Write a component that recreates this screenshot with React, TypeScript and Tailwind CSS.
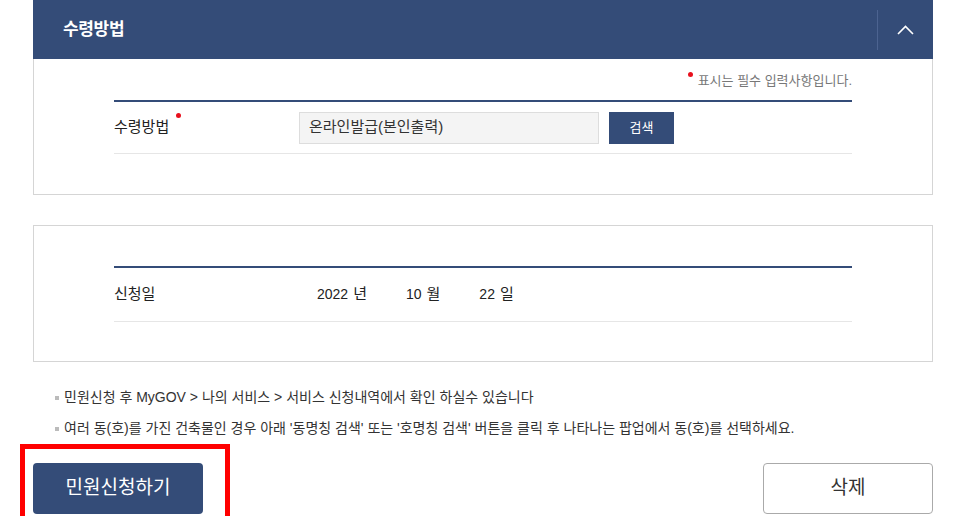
import React from "react";

const font = { fontFamily: '"Liberation Sans", "Noto Sans CJK KR", sans-serif' };

export default function App() {
  return (
    <div className="w-[967px] h-[516px] overflow-hidden bg-white text-[#222]" style={font}>
      <div className="ml-[33px] w-[900px]">
        {/* Header */}
        <div className="h-[59px] bg-[#344c78] flex items-center justify-between">
          <div className="pl-[30px] text-white text-[17px] font-bold tracking-[-0.02em]">수령방법</div>
          <div className="h-full flex items-center">
            <div className="w-px h-[40px] bg-[#4c6390]"></div>
            <div className="w-[55px] flex items-center justify-center">
              <svg width="17" height="10" viewBox="0 0 17 10" fill="none">
                <path d="M1 9 L8.5 1.5 L16 9" stroke="white" strokeWidth="1.6" />
              </svg>
            </div>
          </div>
        </div>

        {/* Panel 1 */}
        <div className="h-[136px] border-x border-b border-[#d5d5d5] px-[80px]">
          <div className="h-[41px] flex items-start justify-end pt-[12px]">
            <span className="relative text-[13px] text-[#777] pl-[10px] leading-[20px]">
              <span className="absolute left-0 top-[1px] w-[5px] h-[5px] rounded-full bg-[#e8101d]"></span>
              표시는 필수 입력사항입니다.
            </span>
          </div>
          <div className="border-t-2 border-[#344c78]">
            <div className="flex items-center h-[52px] border-b border-[#e6e6e6]">
              <div className="w-[185px] relative text-[15px] text-[#222]">
                <span className="relative">
                  수령방법
                  <span className="absolute -right-[12px] -top-[5px] w-[5px] h-[5px] rounded-full bg-[#e8101d]"></span>
                </span>
              </div>
              <div className="w-[300px] h-[32px] bg-[#f4f4f4] border border-[#dddddd] flex items-center pl-[9px] text-[15px] text-[#333]">
                온라인발급(본인출력)
              </div>
              <div className="ml-[10px] w-[65px] h-[32px] bg-[#344c78] text-white text-[13px] flex items-center justify-center">
                검색
              </div>
            </div>
          </div>
        </div>

        {/* Panel 2 */}
        <div className="mt-[30px] h-[137px] border border-[#d5d5d5] px-[80px] pt-[40px]">
          <div className="border-t-2 border-[#344c78]">
            <div className="flex items-center h-[54px] border-b border-[#e6e6e6]">
              <div className="w-[203px] text-[15px] text-[#222]">신청일</div>
              <div className="flex items-center text-[#222]">
                <span className="text-[14px]">2022</span>
                <span className="ml-[5px] text-[15px]">년</span>
                <span className="ml-[39px] text-[14px]">10</span>
                <span className="ml-[5px] text-[15px]">월</span>
                <span className="ml-[39px] text-[14px]">22</span>
                <span className="ml-[5px] text-[15px]">일</span>
              </div>
            </div>
          </div>
        </div>

        {/* Notes */}
        <div className="mt-[25px] pl-[22px] text-[14px] text-[#333] flex flex-col gap-[10px] leading-[21px]">
          <div className="flex items-center">
            <span className="w-[4px] h-[4px] bg-[#bbb] mr-[5px]"></span>
            <span>민원신청 후 MyGOV &gt; 나의 서비스 &gt; 서비스 신청내역에서 확인 하실수 있습니다</span>
          </div>
          <div className="flex items-center">
            <span className="w-[4px] h-[4px] bg-[#bbb] mr-[5px]"></span>
            <span>여러 동(호)를 가진 건축물인 경우 아래 '동명칭 검색' 또는 '호명칭 검색' 버튼을 클릭 후 나타나는 팝업에서 동(호)를 선택하세요.</span>
          </div>
        </div>

        {/* Buttons */}
        <div className="mt-[24px] flex justify-between">
          <div className="relative">
            <div className="absolute -left-[13px] -top-[19px] w-[210px] h-[100px] border-[5px] border-[#ff0000]"></div>
            <div className="relative w-[170px] h-[51px] rounded-[4px] bg-[#344c78] text-white text-[19px] flex items-center justify-center">
              민원신청하기
            </div>
          </div>
          <div className="w-[170px] h-[51px] rounded-[4px] border border-[#aaaaaa] text-[#333] text-[19px] flex items-center justify-center">
            삭제
          </div>
        </div>
      </div>
    </div>
  );
}
